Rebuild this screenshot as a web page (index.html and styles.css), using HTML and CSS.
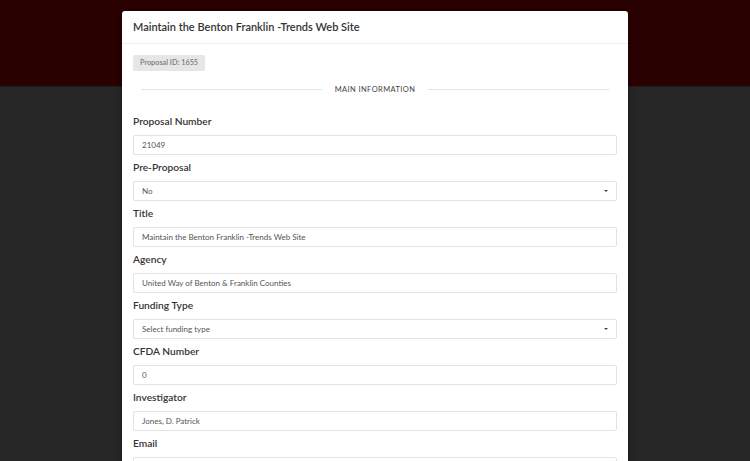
FILE: index.html
```html
<!DOCTYPE html>
<html>
<head>
<meta charset="utf-8">
<link rel="stylesheet" href="styles.css">
</head>
<body>
<div class="top-band"></div>
<div class="modal">
  <div class="modal-header">Maintain the Benton Franklin -Trends Web Site</div>
  <div class="modal-body">
    <span class="badge">Proposal ID: 1655</span>
    <div class="divider"><span>MAIN INFORMATION</span></div>
    <div class="field">
      <label>Proposal Number</label>
      <div class="input">21049</div>
    </div>
    <div class="field">
      <label>Pre-Proposal</label>
      <div class="input select">No</div>
    </div>
    <div class="field">
      <label>Title</label>
      <div class="input">Maintain the Benton Franklin -Trends Web Site</div>
    </div>
    <div class="field">
      <label>Agency</label>
      <div class="input">United Way of Benton &amp; Franklin Counties</div>
    </div>
    <div class="field">
      <label>Funding Type</label>
      <div class="input select">Select funding type</div>
    </div>
    <div class="field">
      <label>CFDA Number</label>
      <div class="input">0</div>
    </div>
    <div class="field">
      <label>Investigator</label>
      <div class="input">Jones, D. Patrick</div>
    </div>
    <div class="field">
      <label>Email</label>
      <div class="input"></div>
    </div>
  </div>
</div>
</body>
</html>
```
FILE: styles.css
```css
html, body {
  margin: 0;
  padding: 0;
  height: 100%;
  overflow: hidden;
}
body {
  background: #262626;
  font-family: Lato, "Open Sans", sans-serif;
  position: relative;
}
.top-band {
  height: 86px;
  background: #2a0101;
  border-bottom: 1px solid #1e1e1e;
}
.modal {
  position: absolute;
  top: 11px;
  left: 122px;
  width: 506px;
  height: 600px;
  background: #fff;
  border-radius: 3px;
  box-shadow: 0 2px 6px rgba(0,0,0,0.4);
}
.modal-header {
  height: 32px;
  line-height: 32px;
  padding: 0 11px;
  font-size: 11px;
  font-weight: 600;
  color: #333;
  border-bottom: 1px solid #efefef;
}
.modal-body {
  display: flex;
  flex-direction: column;
  padding: 11px 11px 0;
}
.badge {
  align-self: flex-start;
  background: #e6e6e6;
  color: #7a7a7a;
  font-size: 7.3px;
  font-weight: 600;
  height: 16px;
  line-height: 16px;
  padding: 0 7px;
  border-radius: 2px;
}
.divider {
  display: flex;
  align-items: center;
  gap: 13px;
  margin: 10px 8px 0;
  height: 16px;
  font-size: 7.5px;
  letter-spacing: 0.4px;
  color: #444;
}
.divider::before, .divider::after {
  content: "";
  flex: 1;
  height: 1px;
  background: #e4e4e4;
}
.field label {
  display: block;
  font-size: 10.2px;
  font-weight: 600;
  color: #333;
  line-height: 14px;
  padding: 5px 0 7px;
}
.divider + .field label {
  padding-top: 17px;
}
.input {
  position: relative;
  height: 20px;
  box-sizing: border-box;
  border: 1px solid #e2e2e2;
  border-radius: 2px;
  font-size: 8px;
  line-height: 18px;
  padding: 0 8px;
  color: #555;
}
.select::after {
  content: "";
  position: absolute;
  right: 8px;
  top: 8px;
  border-left: 2px solid transparent;
  border-right: 2px solid transparent;
  border-top: 2.5px solid #444;
}
```
